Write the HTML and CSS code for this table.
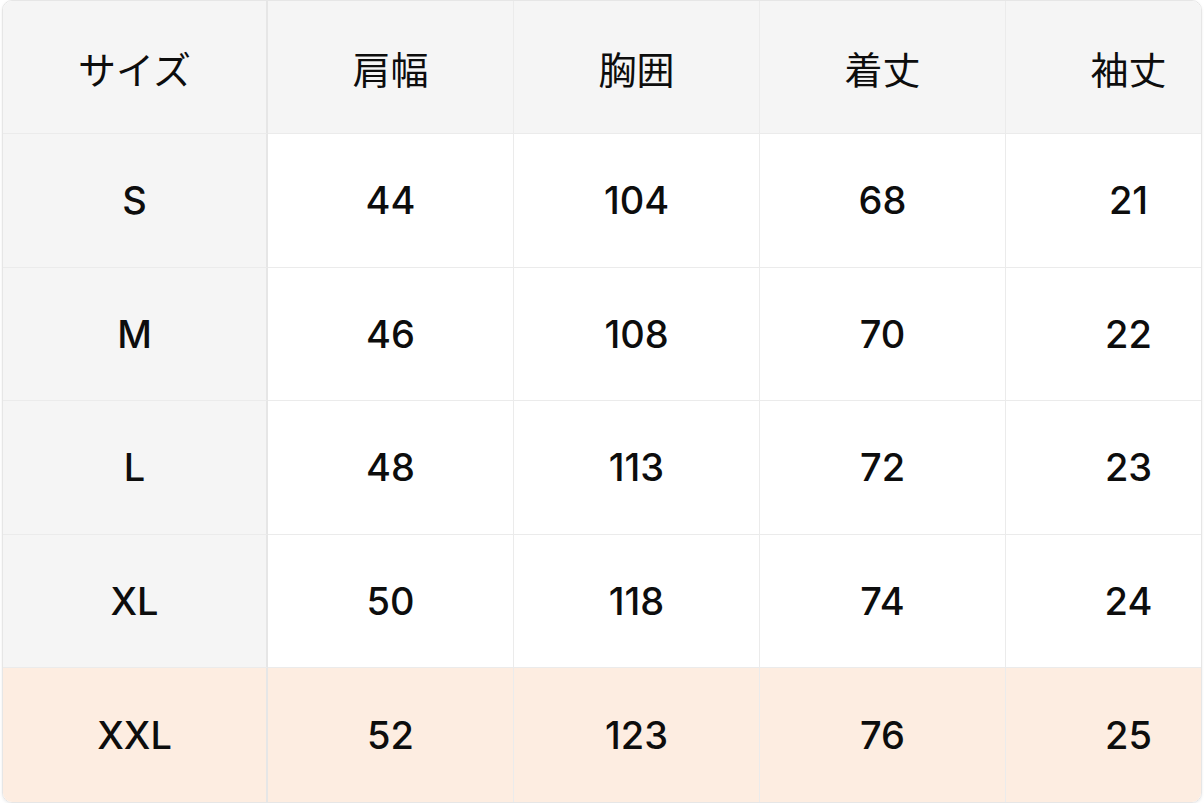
FILE: index.html
```html
<!DOCTYPE html>
<html lang="ja">
<head>
<meta charset="utf-8">
<title>サイズ表</title>
<link rel="stylesheet" href="styles.css">
</head>
<body>
<div class="size-table-wrap">
  <table class="size-table">
    <thead>
      <tr>
        <th class="col-size">サイズ</th>
        <th>肩幅</th>
        <th>胸囲</th>
        <th>着丈</th>
        <th>袖丈</th>
      </tr>
    </thead>
    <tbody>
      <tr><td class="col-size">S</td><td>44</td><td>104</td><td>68</td><td>21</td></tr>
      <tr><td class="col-size">M</td><td>46</td><td>108</td><td>70</td><td>22</td></tr>
      <tr><td class="col-size">L</td><td>48</td><td>113</td><td>72</td><td>23</td></tr>
      <tr><td class="col-size">XL</td><td>50</td><td>118</td><td>74</td><td>24</td></tr>
      <tr class="is-highlight"><td class="col-size">XXL</td><td>52</td><td>123</td><td>76</td><td>25</td></tr>
    </tbody>
  </table>
</div>
</body>
</html>
```
FILE: styles.css
```css
html, body {
  margin: 0;
  padding: 0;
  background: #ffffff;
}

body {
  padding-left: 2px;
  padding-right: 2px;
}

.size-table-wrap {
  border: 1px solid #e6e6e6;
  border-radius: 10px;
  overflow: hidden;
  box-shadow: 0 1px 3px rgba(0, 0, 0, 0.08);
  width: 1198px;
}

.size-table {
  border-collapse: separate;
  border-spacing: 0;
  table-layout: fixed;
  width: 1248px;
  font-family: Inter, "Noto Sans CJK JP", sans-serif;
  font-size: 38px;
  color: #0d0d0d;
}

.size-table th,
.size-table td {
  width: 245px;
  padding: 0;
  text-align: center;
  vertical-align: middle;
  border-right: 1px solid #ebebeb;
  border-bottom: 1px solid #ebebeb;
  font-weight: 500;
  white-space: nowrap;
}

.size-table th {
  height: 132px;
  background: #f5f5f5;
  font-weight: 400;
}

.size-table td {
  height: 132.5px;
  background: #ffffff;
}

.size-table .col-size {
  width: 263px;
  background: #f5f5f5;
  border-right: 2px solid #e6e6e6;
}

.size-table tbody tr:last-child td {
  height: 134px;
  border-bottom: none;
}

.size-table .is-highlight td {
  background: #fdede1;
}
```
